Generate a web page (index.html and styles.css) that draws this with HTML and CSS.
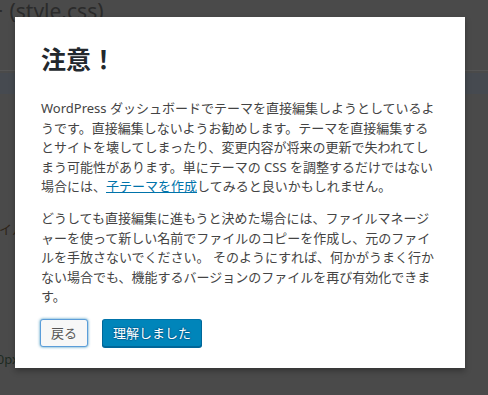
FILE: index.html
```html
<!DOCTYPE html>
<html lang="ja">
<head>
<meta charset="utf-8">
<title>注意！</title>
<link rel="stylesheet" href="styles.css">
</head>
<body>
<div class="page">
  <div class="page-title">ー (style.css)</div>
  <div class="page-rule"></div>
  <div class="page-band"></div>
  <div class="page-row page-row-a">ファイル</div>
  <div class="page-row page-row-b">200px</div>
</div>

<div class="modal" role="dialog">
  <h1 class="modal-title">注意！</h1>
  <p class="modal-text">WordPress ダッシュボードでテーマを直接編集しようとしているようです。直接編集しないようお勧めします。テーマを直接編集するとサイトを壊してしまったり、変更内容が将来の更新で失われてしまう可能性があります。単にテーマの CSS を調整するだけではない場合には、<a href="#">子テーマを作成</a>してみると良いかもしれません。</p>
  <p class="modal-text">どうしても直接編集に進もうと決めた場合には、ファイルマネージャーを使って新しい名前でファイルのコピーを作成し、元のファイルを手放さないでください。 そのようにすれば、何かがうまく行かない場合でも、機能するバージョンのファイルを再び有効化できます。</p>
  <div class="modal-actions">
    <button class="btn btn-secondary" type="button">戻る</button>
    <button class="btn btn-primary" type="button">理解しました</button>
  </div>
</div>
</body>
</html>
```

FILE: styles.css
```css
html, body {
  margin: 0;
  padding: 0;
}

body {
  width: 488px;
  height: 395px;
  overflow: hidden;
  background: #4a4a4a;
  font-family: "Noto Sans", "Noto Sans CJK JP", sans-serif;
  position: relative;
}

.page {
  display: flex;
  flex-direction: column;
}

.page-title {
  font-size: 21px;
  line-height: 22px;
  color: #2b2b2b;
  white-space: nowrap;
  margin-left: -17px;
  height: 70px;
}

.page-rule {
  height: 1px;
  background: #555555;
}

.page-band {
  height: 21px;
  margin-top: 2px;
  background: #464a50;
}

.page-row {
  font-size: 13px;
  color: #2e2418;
  white-space: nowrap;
}

.page-row-a {
  margin-top: 125px;
  margin-left: -27px;
}

.page-row-b {
  margin-top: 112px;
  margin-left: -18px;
  color: #1e2a22;
}

.modal {
  position: absolute;
  left: 15px;
  top: 17px;
  width: 450px;
  height: 351px;
  box-sizing: border-box;
  background: #ffffff;
  box-shadow: 0 3px 6px rgba(0, 0, 0, 0.3);
  padding: 24px 26px 0 26px;
}

.modal-title {
  margin: 0 0 22px 0;
  font-size: 25px;
  line-height: 36px;
  font-weight: 700;
  color: #23282d;
}

.modal-text {
  margin: 0 0 12.5px 0;
  font-size: 13px;
  line-height: 19.5px;
  color: #444444;
}

.modal-text a {
  color: #0073aa;
  text-decoration: underline;
}

.modal-actions {
  display: flex;
  gap: 14px;
  margin-top: 5px;
  margin-left: -1px;
}

.btn {
  font-family: inherit;
  font-size: 13px;
  line-height: 26px;
  height: 28px;
  padding: 0 10px;
  border-radius: 3px;
  border: 1px solid;
  box-sizing: border-box;
  cursor: pointer;
  white-space: nowrap;
}

.btn-secondary {
  color: #555555;
  background: #f7f7f7;
  border-color: #5b9dd9;
  box-shadow: 0 0 3px rgba(0, 115, 170, 0.8);
}

.btn-primary {
  color: #ffffff;
  background: #0085ba;
  border-color: #0073aa #006799 #006799;
  box-shadow: 0 1px 0 #006799;
  text-shadow: 0 -1px 1px #006799, 1px 0 1px #006799, 0 1px 1px #006799, -1px 0 1px #006799;
}
```
